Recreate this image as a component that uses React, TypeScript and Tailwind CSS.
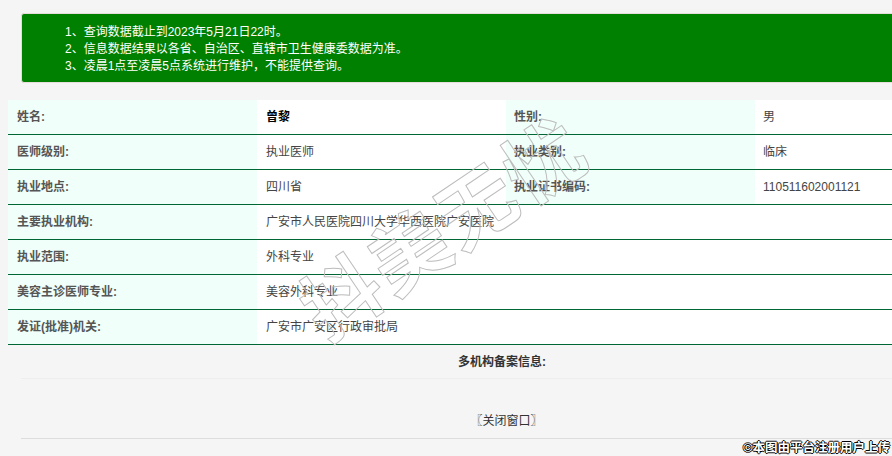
const font = '[font-family:"Liberation_Sans","Noto_Sans_CJK_SC",sans-serif]'

const rows = [
  { label: '姓名:', value: '曾黎', label2: '性别:', value2: '男', strong: true },
  { label: '医师级别:', value: '执业医师', label2: '执业类别:', value2: '临床' },
  { label: '执业地点:', value: '四川省', label2: '执业证书编码:', value2: '110511602001121' },
  { label: '主要执业机构:', value: '广安市人民医院四川大学华西医院广安医院' },
  { label: '执业范围:', value: '外科专业' },
  { label: '美容主诊医师专业:', value: '美容外科专业' },
  { label: '发证(批准)机关:', value: '广安市广安区行政审批局' },
]

function Row({ row }: { row: (typeof rows)[number] }) {
  return (
    <div className="flex h-[35px] border-b border-[#006633] bg-white text-xs leading-[34px]">
      <div className="w-[249px] shrink-0 bg-[#f0fff9] pl-[9px] font-bold text-[#555]">{row.label}</div>
      <div className={`w-[249px] shrink-0 pl-[9px] ${row.strong ? 'font-bold text-black' : 'text-[#444]'}`}>{row.value}</div>
      {row.label2 && (
        <>
          <div className="w-[249px] shrink-0 bg-[#f0fff9] pl-[8px] font-bold text-[#555]">{row.label2}</div>
          <div className="w-[249px] shrink-0 pl-[8px] text-[#444]">{row.value2}</div>
        </>
      )}
    </div>
  )
}

export default function App() {
  return (
    <div className={`relative h-[456px] w-[892px] overflow-hidden bg-[#f5f5f5] ${font}`}>
      <div className="ml-[21px] mt-[13px] h-[70px] w-[1000px] rounded-[3px] border border-[#e8dcdc] bg-[#008000] pl-[43px] pt-[10px] text-xs leading-[17px] text-white">
        <p>1、查询数据截止到2023年5月21日22时。</p>
        <p>2、信息数据结果以各省、自治区、直辖市卫生健康委数据为准。</p>
        <p>3、凌晨1点至凌晨5点系统进行维护，不能提供查询。</p>
      </div>

      <div className="ml-2 mt-[17px] w-[1000px]">
        {rows.map((row) => (
          <Row key={row.label} row={row} />
        ))}
      </div>

      <div className="ml-[21px] w-[1000px]">
        <div className="h-[34px] border-b border-[#eeeeee] pr-[38px] text-center text-xs font-bold leading-[35px] text-[#333]">
          多机构备案信息:
        </div>
        <div className="h-[60px] border-b border-[#dddddd] pr-[29px] pt-[34px] text-center text-xs leading-[17px] text-[#333]">
          〖关闭窗口〗
        </div>
      </div>

      <div className="absolute left-[283px] top-[191px] origin-center -rotate-[34deg] whitespace-nowrap text-[78px] font-bold leading-none tracking-[3px] text-transparent [-webkit-text-stroke:1px_#bdbdbd]">
        抖美无忧
      </div>

      <div className="absolute bottom-[1px] right-[2px] text-[12.5px] font-bold leading-[14px] text-white [text-shadow:-1px_0_#000,1px_0_#000,0_-1px_#000,0_1px_#000]">
        ©本图由平台注册用户上传
      </div>
    </div>
  )
}
